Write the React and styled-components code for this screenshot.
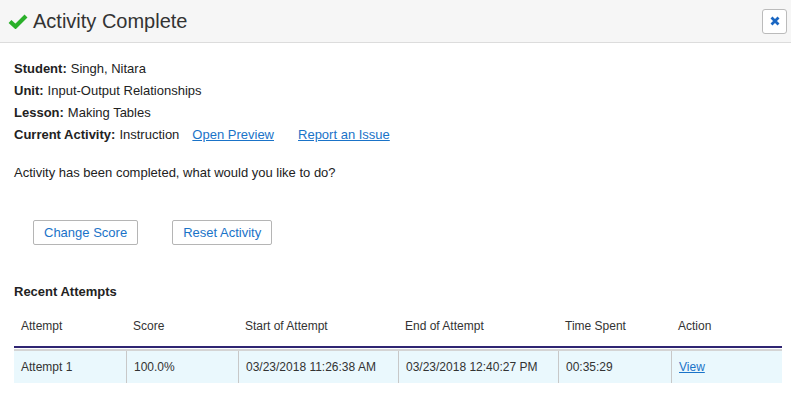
import React from "react";
import styled, { createGlobalStyle } from "styled-components";

const Global = createGlobalStyle`
  html, body { margin: 0; padding: 0; background: #fff; }
  body { font-family: "Liberation Sans", Arial, sans-serif; color: #222; }
`;

const Dialog = styled.div`
  width: 791px;
  height: 398px;
  background: #fff;
  overflow: hidden;
`;

const Header = styled.div`
  display: flex;
  align-items: center;
  height: 43px;
  padding: 0 4px 0 8px;
  background: #f6f6f6;
  border-bottom: 1px solid #dcdcdc;
  box-sizing: border-box;
`;

const Title = styled.h1`
  flex: 1;
  display: flex;
  align-items: center;
  gap: 5px;
  margin: 0;
  font-size: 20px;
  font-weight: normal;
  color: #333;
`;

const CloseButton = styled.button`
  width: 25px;
  height: 25px;
  padding: 0;
  display: flex;
  align-items: center;
  justify-content: center;
  background: #fff;
  border: 1px solid #bbb;
  border-radius: 3px;
`;

const Body = styled.div`
  padding: 15px 14px 0 14px;
  font-size: 13px;
`;

const InfoLine = styled.div`
  line-height: 22px;
  display: flex;
`;

const Label = styled.b`
  margin-right: 4px;
`;

const Link = styled.a`
  color: #1a73c8;
  text-decoration: underline;
  margin-left: ${(p) => p.$ml || 0}px;
  cursor: pointer;
`;

const Message = styled.p`
  margin: 16px 0 0 0;
  line-height: 22px;
`;

const Buttons = styled.div`
  display: flex;
  gap: 34px;
  padding-left: 19px;
  margin-top: 36px;
`;

const Button = styled.button`
  height: 25px;
  padding: 0 10px;
  background: #fff;
  border: 1px solid #b5b5b5;
  border-radius: 2px;
  font-family: "Liberation Sans", Arial, sans-serif;
  font-size: 13px;
  color: #1a73c8;
`;

const SectionTitle = styled.h2`
  margin: 39px 0 0 0;
  font-size: 13px;
  font-weight: bold;
  line-height: 16px;
`;

const Table = styled.div`
  margin-top: 9px;
  width: 768px;
`;

const Grid = styled.div`
  display: grid;
  grid-template-columns: 112px 112px 160px 160px 113px 111px;
`;

const HeadRow = styled(Grid)`
  height: 37px;
  box-sizing: content-box;
  align-items: center;
  padding-bottom: 0;
  border-bottom: 2px solid #2f2572;
  font-size: 12px;
  color: #333;
`;

const HeadCell = styled.div`
  padding-left: 7px;
  padding-bottom: 4px;
`;

const DataRow = styled(Grid)`
  background: #eaf8fd;
  border-top: 2px solid #d4d4d4;
  height: 32px;
  margin-top: 1px;
`;

const Cell = styled.div`
  padding-left: 7px;
  display: flex;
  align-items: center;
  font-size: 12px;
  color: #333;
  border-left: ${(p) => (p.$first ? "none" : "1px solid #c8c8c8")};
`;

const info = [
  ["Student:", "Singh, Nitara"],
  ["Unit:", "Input-Output Relationships"],
  ["Lesson:", "Making Tables"],
];

const heads = ["Attempt", "Score", "Start of Attempt", "End of Attempt", "Time Spent", "Action"];

export default function App() {
  return (
    <>
      <Global />
      <Dialog>
        <Header>
          <Title>
            <svg width="20" height="16" viewBox="0 0 20 16">
              <path d="M2 8.5 L7.5 13.5 L18 3" fill="none" stroke="#2ab02a" strokeWidth="4.2" strokeLinejoin="miter" />
            </svg>
            Activity Complete
          </Title>
          <CloseButton aria-label="Close">
            <svg width="10" height="10" viewBox="0 0 10 10">
              <path d="M1.5 1.5 L8.5 8.5 M8.5 1.5 L1.5 8.5" stroke="#1a66c2" strokeWidth="2.8" />
            </svg>
          </CloseButton>
        </Header>
        <Body>
          {info.map(([l, v]) => (
            <InfoLine key={l}>
              <Label>{l}</Label>
              {v}
            </InfoLine>
          ))}
          <InfoLine>
            <Label>Current Activity:</Label>
            Instruction
            <Link $ml={13}>Open Preview</Link>
            <Link $ml={24}>Report an Issue</Link>
          </InfoLine>
          <Message>Activity has been completed, what would you like to do?</Message>
          <Buttons>
            <Button>Change Score</Button>
            <Button>Reset Activity</Button>
          </Buttons>
          <SectionTitle>Recent Attempts</SectionTitle>
          <Table>
            <HeadRow>
              {heads.map((h) => (
                <HeadCell key={h}>{h}</HeadCell>
              ))}
            </HeadRow>
            <DataRow>
              <Cell $first>Attempt 1</Cell>
              <Cell>100.0%</Cell>
              <Cell>03/23/2018 11:26:38 AM</Cell>
              <Cell>03/23/2018 12:40:27 PM</Cell>
              <Cell>00:35:29</Cell>
              <Cell>
                <Link>View</Link>
              </Cell>
            </DataRow>
          </Table>
        </Body>
      </Dialog>
    </>
  );
}
